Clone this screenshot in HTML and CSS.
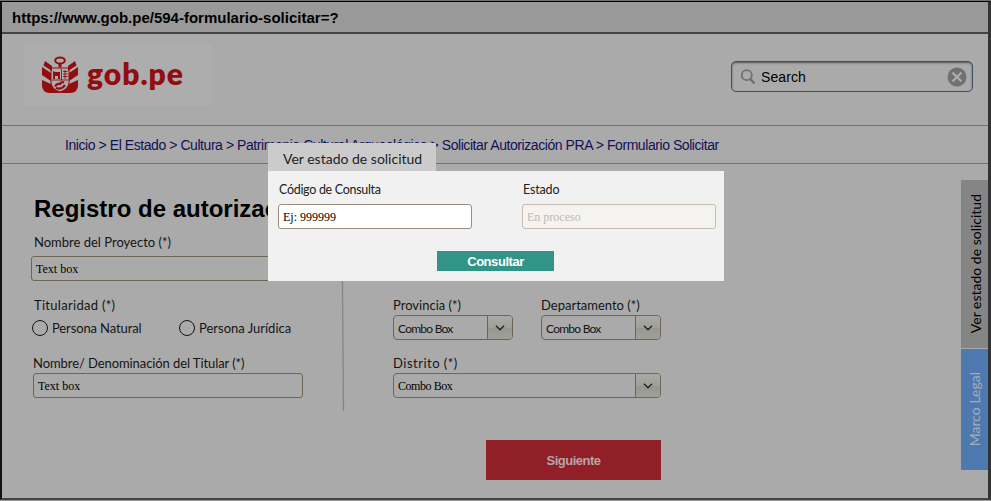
FILE: index.html
```html
<!DOCTYPE html>
<html lang="es">
<head>
<meta charset="utf-8">
<title>Formulario Solicitar</title>
<link rel="stylesheet" href="styles.css">
</head>
<body>
<div class="window">
  <div class="address">https://www.gob.pe/594-formulario-solicitar=?</div>
  <header class="header">
    <div class="brand">
      <svg class="shield" width="38" height="38" viewBox="0 0 38 38">
        <g fill="none" stroke="#910d10">
          <ellipse cx="19" cy="4.500" rx="4.800" ry="3" stroke-width="2"/>
          <path d="M19 7.500v4" stroke-width="3"/>
        </g>
        <g fill="#910d10">
          <path d="M4 5l7 5v5L2.500 9.500zM34 5l-7 5v5l8.500-5.500z"/>
          <path d="M1 11l9 6v8L1 19zM37 11l-9 6v8l9-6z"/>
          <path d="M1 24l9 4q2 6 9 8v1H8q-7-1-7-8zM37 24l-9 4q-2 6-9 8v1h11q7-1 7-8z"/>
          <path d="M12 15l2 1h5v7h-2v-3h-3v3h-2z"/>
        </g>
        <g fill="none" stroke="#910d10">
          <path d="M10 12h18v14q0 7-9 10-9-3-9-10z" stroke-width="1"/>
          <path d="M11 24h16M20.500 13v11M24 14v9M22 15.500h4.500M22 18h4.500M22 20.500h4.500" stroke-width=".9"/>
          <path d="M23 26.500q-3-1-4 1.500-3-1-5 2.500M15 32q6 2 9-3" stroke-width="2.200"/>
        </g>
      </svg>
      <span class="brand-name">gob.pe</span>
    </div>
    <div class="search">
      <svg width="16" height="16" viewBox="0 0 16 16" fill="none" stroke="#6c7073"><circle cx="6.800" cy="6.200" r="5" stroke-width="1.800"/><path d="M10.200 10l4.300 4.600" stroke-width="2.200"/></svg>
      <span class="search-text">Search</span>
      <svg width="20" height="20" viewBox="0 0 20 20"><circle cx="10" cy="10" r="9.500" fill="#717171"/><path d="M6.200 6.200l7.600 7.600M13.800 6.200l-7.600 7.600" stroke="#b0b0b0" stroke-width="2.100" stroke-linecap="round"/></svg>
    </div>
  </header>
  <nav class="crumbs">Inicio &gt; El Estado &gt; Cultura &gt; Patrimonio Cultural Arqueológico &gt; Solicitar Autorización PRA &gt; Formulario Solicitar</nav>
  <main class="content">
    <section class="left">
      <h1>Registro de autorización</h1>
      <div class="label project">Nombre del Proyecto (*)</div>
      <div class="input wide">Text box</div>
      <div class="label holder">Titularidad (*)</div>
      <div class="radios">
        <div class="radio"><i></i><span class="natural">Persona Natural</span></div>
        <div class="radio"><i></i><span class="legal">Persona Jurídica</span></div>
      </div>
      <div class="label name">Nombre/ Denominación del Titular (*)</div>
      <div class="input owner">Text box</div>
    </section>
    <svg class="divider" width="4" height="240" viewBox="0 0 4 240"><path d="M.5 0l2 240" stroke="#858585" stroke-width="1.300"/></svg>
    <section class="right">
      <div class="pair">
        <div>
          <div class="label provincia">Provincia (*)</div>
          <div class="combo sans"><span>Combo Box</span><b><svg width="10" height="6" viewBox="0 0 10 6"><path d="M1 .8l4 4 4-4"/></svg></b></div>
        </div>
        <div>
          <div class="label departamento">Departamento (*)</div>
          <div class="combo sans"><span>Combo Box</span><b><svg width="10" height="6" viewBox="0 0 10 6"><path d="M1 .8l4 4 4-4"/></svg></b></div>
        </div>
      </div>
      <div class="label distrito">Distrito (*)</div>
      <div class="combo"><span>Combo Box</span><b><svg width="10" height="6" viewBox="0 0 10 6"><path d="M1 .8l4 4 4-4"/></svg></b></div>
      <div class="next">Siguiente</div>
    </section>
  </main>
</div>
<aside class="side">
  <div class="side-state"><span>Ver estado de solicitud</span></div>
  <div class="side-law"><span>Marco Legal</span></div>
</aside>
<div class="modal">
  <div class="modal-tab"><span>Ver estado de solicitud</span></div>
  <div class="modal-body">
    <div class="fields">
      <div><div class="modal-label code">Código de Consulta</div><div class="input query">Ej: 999999</div></div>
      <div><div class="modal-label state">Estado</div><div class="input disabled">En proceso</div></div>
    </div>
    <div class="consult">Consultar</div>
  </div>
</div>
</body>
</html>
```
FILE: styles.css
```css
* { box-sizing: border-box; }
body {
  margin: 0;
  width: 991px;
  height: 501px;
  overflow: hidden;
  position: relative;
  background: #111;
  font-family: "Liberation Sans", sans-serif;
  color: #000;
}
.window {
  height: 499px;
  border: 2px solid #111;
  border-right: 3px solid #333;
  border-bottom-color: #444;
  border-top: 1px solid #000;
  margin-top: 1px;
  background: #aaa;
  box-shadow: 0 -1px #707070, 0 1px #999;
}
.address {
  height: 32px;
  padding-left: 10px;
  border-bottom: 2px solid #444;
  background: #999;
  font-weight: bold;
  font-size: 15px;
  line-height: 31px;
  white-space: nowrap;
}
.header {
  height: 92px;
  display: flex;
  justify-content: space-between;
  padding: 10px 15px 0 22px;
  border-bottom: 1px solid #74746a;
}
.brand {
  width: 188px;
  height: 62px;
  display: flex;
  padding: 12px 0 0 17px;
  background: #adadad;
}
.brand-name {
  margin-left: 8px;
  font: 800 30px/34px Lato, sans-serif;
  letter-spacing: 1px;
  color: #910d10;
}
.search {
  width: 242px;
  height: 31px;
  margin-top: 17px;
  padding: 0 5px 0 8px;
  display: flex;
  align-items: center;
  border: 1px solid #414e5d;
  border-radius: 5px;
  background: #aaa;
  box-shadow: inset 0 1px 2px #555;
}
.search-text { margin-left: 5px; flex: 1; font-size: 14px; letter-spacing: .1px; }
.crumbs {
  height: 38px;
  padding-left: 63px;
  border-bottom: 1px solid #74746a;
  color: #121258;
  font-size: 14px;
  letter-spacing: -.435px;
  line-height: 39px;
  white-space: nowrap;
}
.content { display: flex; height: 333px; }
.left { width: 339px; padding: 30px 0 0 29px; }
h1 { margin: 0 0 0 3px; font-size: 24px; line-height: 30px; white-space: nowrap; }
.label { font: 13px/18px Lato, sans-serif; color: #151515; white-space: nowrap; }
.project { margin: 9px 0 5px 3px; }
.input {
  height: 25px;
  padding-left: 4px;
  border: 1px solid #6f6658;
  border-radius: 3px;
  font: 12px/25px "Liberation Serif", serif;
  white-space: nowrap;
}
.wide { width: 300px; }
.holder { margin: 15px 0 0 3px; letter-spacing: .3px; }
.radios { display: flex; height: 28px; align-items: center; }
.radio { width: 147px; display: flex; align-items: center; gap: 4px; font: 13px/18px Lato, sans-serif; white-space: nowrap; color: #151515; }
.radio i { width: 16px; height: 16px; margin-left: 1px; border: 1px solid #151515; border-radius: 50%; }
.natural { letter-spacing: -.12px; }
.name { margin: 12px 0 1px 2px; letter-spacing: -.08px; }
.owner { width: 270px; margin-left: 2px; }
.divider { margin-top: 7px; }
.right { width: 268px; margin-left: 48px; padding-top: 132px; }
.pair { display: flex; gap: 28px; margin-bottom: 14px; }
.provincia, .departamento { margin-bottom: 1px; }
.pair > div { width: 120px; }
.distrito { margin-bottom: 1px; letter-spacing: .5px; }
.combo {
  height: 25px;
  display: flex;
  border: 1px solid #6f6658;
  border-radius: 4px;
  font: 12px/25px "Liberation Serif", serif;
  letter-spacing: -.45px;
  overflow: hidden;
}
.combo span { flex: 1; padding-left: 4px; white-space: nowrap; }
.sans { font-family: Lato, sans-serif; letter-spacing: -.75px; color: #151515; }
.combo b { width: 25px; display: flex; align-items: center; justify-content: center; border-left: 1px solid #6f6658; background: linear-gradient(#a9a9a7, #a0a09a 50%, #979790 51%, #a0a09a); }
.combo path { fill: none; stroke: #222; stroke-width: 1.4; }
.next { width: 175px; height: 40px; margin: 42px 0 0 93px; background: #911f27; color: #b5a5a7; font: bold 13px/42px "Liberation Sans", sans-serif; letter-spacing: -.5px; text-align: center; }
.side { position: absolute; left: 961px; top: 180px; width: 27px; }
.side > div { display: flex; align-items: center; justify-content: center; padding-left: 3px; font: 14px/18px Lato, sans-serif; white-space: nowrap; }
.side span { writing-mode: vertical-rl; transform: rotate(180deg); }
.side-state { height: 168px; background: #858585; }
.side .side-law { height: 121px; margin-top: 1px; padding-left: 1px; background: #4e79af; color: #a3adb8; }
.modal { position: absolute; left: 268px; top: 143px; width: 456px; }
.modal-tab { width: 168px; height: 28px; padding-left: 15px; background: #cbcbcb; font: 14px/31px Lato, sans-serif; white-space: nowrap; color: #222; }
.modal-body { height: 110px; padding: 10px 8px 0 10px; background: #f1f1f1; }
.fields { display: flex; justify-content: space-between; }
.fields > div { width: 194px; }
.modal-label { margin-left: 1px; font: 12.5px/18px Lato, sans-serif; letter-spacing: -.3px; margin-bottom: 5px; color: #222; }
.state { letter-spacing: -.15px; }
.query { background: #fff; border-color: #9c8e7c; }
.disabled { background: #f5f3ef; border-color: #c4bcae; color: #bbb9b5; }
.consult { width: 117px; height: 20px; margin: 22px 0 0 159px; background: #329487; color: #fff; font: bold 13px/21px "Liberation Sans", sans-serif; letter-spacing: -.45px; text-align: center; }
```
